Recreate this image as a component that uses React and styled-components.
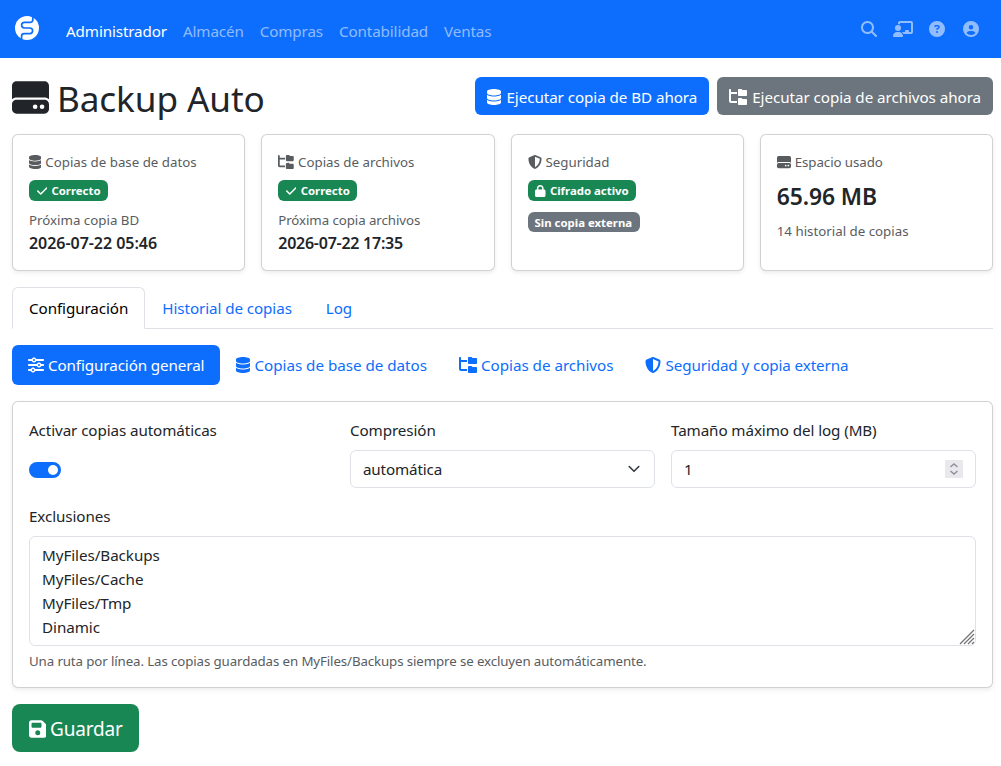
import styled, { createGlobalStyle } from "styled-components";
import {
    FaChalkboardUser,
    FaCheck,
    FaCircleQuestion,
    FaCircleUser,
    FaDatabase,
    FaFloppyDisk,
    FaFolderTree,
    FaHardDrive,
    FaLock,
    FaMagnifyingGlass,
    FaShieldHalved,
    FaSliders,
} from "react-icons/fa6";

const GlobalStyle = createGlobalStyle`
    * {
        box-sizing: border-box;
    }
    body {
        margin: 0;
        background-color: #ffffff;
        color: #212529;
        font-family: "Noto Sans", "Open Sans", sans-serif;
        font-size: 15.2px;
        line-height: 24px;
    }
    svg {
        display: block;
        flex: none;
    }
`;

const DatabaseIcon = styled(FaDatabase)`
    width: 0.875em;
`;
const FolderTreeIcon = styled(FaFolderTree)`
    width: 1.125em;
`;
const CheckIcon = styled(FaCheck)`
    width: 0.875em;
`;
const LockIcon = styled(FaLock)`
    width: 0.875em;
`;
const SaveIcon = styled(FaFloppyDisk)`
    width: 0.875em;
`;
const BoardIcon = styled(FaChalkboardUser)`
    width: 1.25em;
`;
const UserIcon = styled(FaCircleUser)`
    margin-left: 2px;
`;

const Navbar = styled.nav`
    height: 58px;
    padding: 0 22px 0 15px;
    display: flex;
    align-items: center;
    background-color: #0d6efd;
`;
const Brand = styled.a`
    margin: 0 27px 3px 0;
`;
const NavLinks = styled.div`
    display: flex;
    gap: 16px;
    flex: 1;
    padding-top: 4px;
`;
const NavLink = styled.a`
    color: ${({ $active }) => ($active ? "#ffffff" : "rgba(255, 255, 255, 0.55)")};
    letter-spacing: -0.12px;
`;
const NavIcons = styled.div`
    display: flex;
    align-items: center;
    gap: 16px;
    color: rgba(255, 255, 255, 0.55);
    font-size: 16px;
`;

const Page = styled.main`
    padding: 19px 8px 0 12px;
`;
const Header = styled.header`
    display: flex;
    justify-content: space-between;
    height: 57px;
`;
const Title = styled.h1`
    margin: 0;
    display: flex;
    gap: 8px;
    font-size: 35.15px;
    font-weight: 400;
    line-height: 42px;
    letter-spacing: -0.1px;
    svg {
        font-size: 37px;
        margin-top: 2px;
    }
`;
const Actions = styled.div`
    display: flex;
    gap: 8px;
`;
const Button = styled.button`
    height: 38px;
    padding: 1px 12px 0;
    display: flex;
    align-items: center;
    gap: 5px;
    border: none;
    border-radius: 6px;
    background-color: ${({ $color }) => $color};
    color: #ffffff;
    font: inherit;
    letter-spacing: -0.06px;
    white-space: nowrap;
    svg {
        font-size: 16px;
    }
`;
const SaveButton = styled(Button)`
    height: 48px;
    margin-top: 16px;
    padding: 2px 16px 0 16.6px;
    border-radius: 8px;
    font-size: 19px;
    letter-spacing: -0.2px;
    gap: 4px;
    svg {
        font-size: 20px;
    }
`;

const Cards = styled.section`
    display: grid;
    grid-template-columns: repeat(4, 1fr);
    gap: 16px;
`;
const Card = styled.div`
    border: 1px solid rgba(0, 0, 0, 0.175);
    border-radius: 6px;
    background-color: #ffffff;
    box-shadow: 0 2px 4px rgba(0, 0, 0, 0.075);
`;
const StatCard = styled(Card)`
    height: 137px;
    padding: 16px;
    display: flex;
    flex-direction: column;
    align-items: flex-start;
`;
const Small = styled.div`
    display: flex;
    align-items: center;
    gap: 4px;
    margin-top: ${({ $top }) => $top || 0}px;
    color: #595c5f;
    font-size: 13.3px;
    line-height: 22px;
    letter-spacing: ${({ $tight }) => ($tight ? "-0.08px" : "0")};
    svg {
        font-size: 14px;
    }
`;
const Badge = styled.span`
    height: ${({ $short }) => ($short ? 20 : 21)}px;
    margin-top: ${({ $top }) => $top}px;
    padding: ${({ $short }) => ($short ? "1px 7.5px 0 7px" : "0 7.5px")};
    display: flex;
    align-items: center;
    gap: 4.4px;
    border-radius: 6px;
    background-color: ${({ $color }) => $color};
    color: #ffffff;
    font-size: 11.4px;
    font-weight: 700;
    svg {
        font-size: 12px;
    }
`;
const Strong = styled.strong`
    font-size: 16px;
    font-weight: 600;
    line-height: 24px;
    letter-spacing: ${({ $ls }) => $ls || -0.04}px;
`;
const Usage = styled.strong`
    margin-top: 8px;
    font-size: 22.9px;
    font-weight: 600;
    line-height: 32px;
    letter-spacing: -0.1px;
`;

const Tabs = styled.div`
    display: flex;
    height: 42px;
    margin-top: 16px;
    border-bottom: 1px solid #dee2e6;
`;
const Tab = styled.a`
    height: 42px;
    padding: 8px 16px 0;
    border: 1px solid;
    border-color: ${({ $active }) => ($active ? "#dee2e6 #dee2e6 #ffffff" : "transparent")};
    border-radius: 6px 6px 0 0;
    background-color: ${({ $active }) => ($active ? "#ffffff" : "transparent")};
    color: ${({ $active }) => ($active ? "#000000" : "#0d6efd")};
    letter-spacing: -0.08px;
`;
const Pills = styled.div`
    display: flex;
    margin: 16px 0;
`;
const Pill = styled.a`
    height: 40px;
    padding: 0 16px;
    display: flex;
    align-items: center;
    gap: 4px;
    border-radius: 6px;
    background-color: ${({ $active }) => ($active ? "#0d6efd" : "transparent")};
    color: ${({ $active }) => ($active ? "#ffffff" : "#0d6efd")};
    letter-spacing: ${({ $tight }) => ($tight ? "-0.1px" : "-0.02px")};
    svg {
        font-size: 16px;
    }
`;

const Panel = styled(Card)`
    height: 287px;
    padding: 16px;
`;
const Fields = styled.div`
    display: grid;
    grid-template-columns: repeat(3, 1fr);
    gap: 16px;
    height: 86px;
`;
const Label = styled.label`
    display: block;
    margin-bottom: 8px;
    letter-spacing: -0.09px;
`;
const Switch = styled.div`
    width: 32px;
    height: 16px;
    margin-top: 20px;
    padding: 3px;
    display: flex;
    justify-content: flex-end;
    border-radius: 8px;
    background-color: #0d6efd;
    &::after {
        content: "";
        width: 10px;
        height: 10px;
        border-radius: 50%;
        background-color: #ffffff;
    }
`;
const Control = styled.div`
    height: 38px;
    padding: 0 12px;
    display: flex;
    align-items: center;
    justify-content: space-between;
    border: 1px solid #dee2e6;
    border-radius: 6px;
    letter-spacing: -0.15px;
`;
const Spinner = styled.span`
    width: 18px;
    height: 18px;
    display: flex;
    align-items: center;
    justify-content: center;
    background-color: #e9e9ed;
`;
const TextArea = styled.textarea`
    display: block;
    width: 100%;
    height: 110px;
    padding: 6px 12px;
    border: 1px solid #dee2e6;
    border-radius: 6px;
    outline: none;
    resize: none;
    overflow: hidden;
    color: inherit;
    font: inherit;
    letter-spacing: -0.05px;
`;
const TextAreaBox = styled.div`
    position: relative;
`;
const Grip = styled.svg`
    position: absolute;
    right: 1px;
    bottom: 1px;
`;
const Hint = styled.div`
    margin-top: 4px;
    color: #595c5f;
    font-size: 13.3px;
    line-height: 22px;
    letter-spacing: -0.115px;
`;

const Logo = () => (
    <svg width="24" height="24" viewBox="0 0 24 24">
        <circle cx="12" cy="12" r="12" fill="#ffffff" />
        <path
            d="M17.8 0V4Q17.8 6.3 15.5 6.3H9.5Q6.6 6.3 6.6 9.1T9.5 12H14.8Q17.6 12 17.6 14.8T14.8 17.6H9Q6.6 17.6 6.6 20V24"
            fill="none"
            stroke="#0d6efd"
            strokeWidth="1.7"
        />
    </svg>
);

const App = () => {
    return (
        <>
            <GlobalStyle />
            <Navbar>
                <Brand>
                    <Logo />
                </Brand>
                <NavLinks>
                    <NavLink $active>Administrador</NavLink>
                    <NavLink>Almacén</NavLink>
                    <NavLink>Compras</NavLink>
                    <NavLink>Contabilidad</NavLink>
                    <NavLink>Ventas</NavLink>
                </NavLinks>
                <NavIcons>
                    <FaMagnifyingGlass />
                    <BoardIcon />
                    <FaCircleQuestion />
                    <UserIcon />
                </NavIcons>
            </Navbar>
            <Page>
                <Header>
                    <Title>
                        <FaHardDrive />
                        Backup Auto
                    </Title>
                    <Actions>
                        <Button $color="#0d6efd">
                            <DatabaseIcon />
                            Ejecutar copia de BD ahora
                        </Button>
                        <Button $color="#6c757d">
                            <FolderTreeIcon />
                            Ejecutar copia de archivos ahora
                        </Button>
                    </Actions>
                </Header>
                <Cards>
                    <StatCard>
                        <Small>
                            <DatabaseIcon />
                            Copias de base de datos
                        </Small>
                        <Badge $color="#198754" $top={7}>
                            <CheckIcon />
                            Correcto
                        </Badge>
                        <Small $top={8}>Próxima copia BD</Small>
                        <Strong>2026-07-22 05:46</Strong>
                    </StatCard>
                    <StatCard>
                        <Small>
                            <FolderTreeIcon />
                            Copias de archivos
                        </Small>
                        <Badge $color="#198754" $top={7}>
                            <CheckIcon />
                            Correcto
                        </Badge>
                        <Small $top={8} $tight>
                            Próxima copia archivos
                        </Small>
                        <Strong $ls={-0.25}>2026-07-22 17:35</Strong>
                    </StatCard>
                    <StatCard>
                        <Small>
                            <FaShieldHalved />
                            Seguridad
                        </Small>
                        <Badge $color="#198754" $top={7}>
                            <LockIcon />
                            Cifrado activo
                        </Badge>
                        <Badge $color="#6c757d" $top={11} $short>
                            Sin copia externa
                        </Badge>
                    </StatCard>
                    <StatCard>
                        <Small $tight>
                            <FaHardDrive />
                            Espacio usado
                        </Small>
                        <Usage>65.96 MB</Usage>
                        <Small $top={7}>14 historial de copias</Small>
                    </StatCard>
                </Cards>
                <Tabs>
                    <Tab $active>Configuración</Tab>
                    <Tab>Historial de copias</Tab>
                    <Tab>Log</Tab>
                </Tabs>
                <Pills>
                    <Pill $active $tight>
                        <FaSliders />
                        Configuración general
                    </Pill>
                    <Pill>
                        <DatabaseIcon />
                        Copias de base de datos
                    </Pill>
                    <Pill>
                        <FolderTreeIcon />
                        Copias de archivos
                    </Pill>
                    <Pill $tight>
                        <FaShieldHalved />
                        Seguridad y copia externa
                    </Pill>
                </Pills>
                <Panel>
                    <Fields>
                        <div>
                            <Label>Activar copias automáticas</Label>
                            <Switch />
                        </div>
                        <div>
                            <Label>Compresión</Label>
                            <Control>
                                automática
                                <svg width="16" height="16" viewBox="0 0 16 16">
                                    <path
                                        d="m2 5 6 6 6-6"
                                        fill="none"
                                        stroke="#343a40"
                                        strokeWidth="2"
                                        strokeLinecap="round"
                                        strokeLinejoin="round"
                                        transform="translate(1.6 1.5) scale(0.8)"
                                    />
                                </svg>
                            </Control>
                        </div>
                        <div>
                            <Label>Tamaño máximo del log (MB)</Label>
                            <Control>
                                1
                                <Spinner>
                                    <svg width="10" height="14" viewBox="0 0 10 14">
                                        <path
                                            d="M1.5 5 5 2l3.5 3M1.5 9 5 12l3.5-3"
                                            fill="none"
                                            stroke="#8f8f9d"
                                            strokeWidth="1.5"
                                        />
                                    </svg>
                                </Spinner>
                            </Control>
                        </div>
                    </Fields>
                    <Label>Exclusiones</Label>
                    <TextAreaBox>
                        <TextArea readOnly value={"MyFiles/Backups\nMyFiles/Cache\nMyFiles/Tmp\nDinamic"} />
                        <Grip width="16" height="16" viewBox="0 0 16 16">
                            <path
                                d="M1 15 15 1M5 15 15 5M9 15l6-6M13 15l2-2"
                                stroke="#757575"
                                strokeWidth="1.3"
                            />
                        </Grip>
                    </TextAreaBox>
                    <Hint>
                        Una ruta por línea. Las copias guardadas en MyFiles/Backups siempre se excluyen
                        automáticamente.
                    </Hint>
                </Panel>
                <SaveButton $color="#198754">
                    <SaveIcon />
                    Guardar
                </SaveButton>
            </Page>
        </>
    );
};

export default App;
